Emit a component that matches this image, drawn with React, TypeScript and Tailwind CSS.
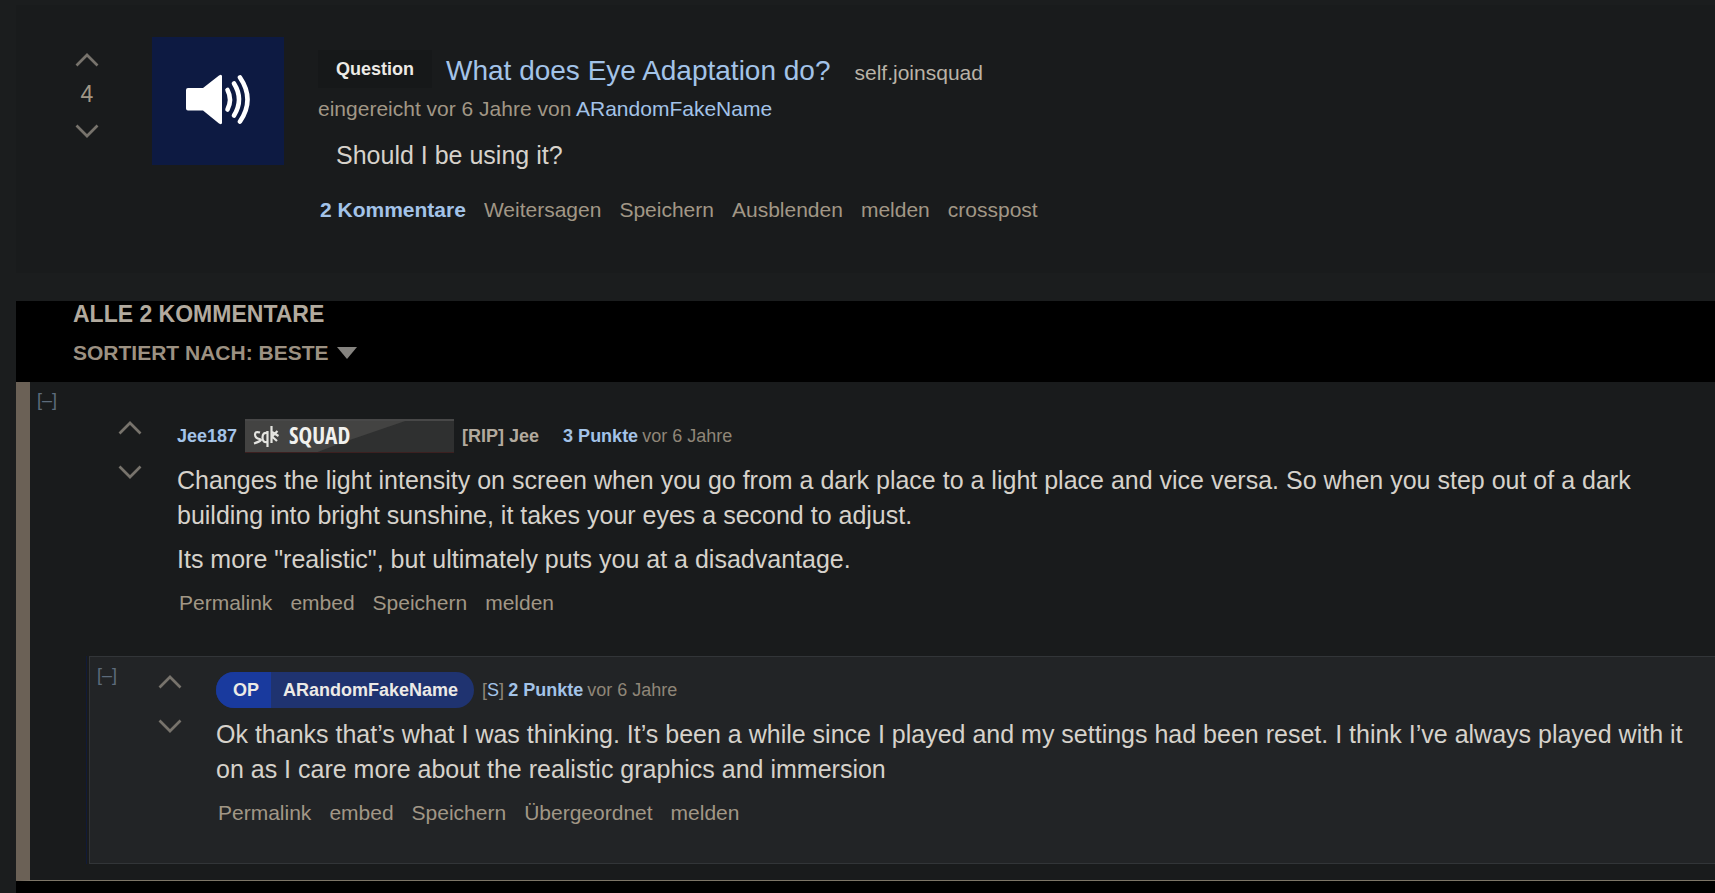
import React from 'react';

interface ArrowProps {
  dir: 'up' | 'down';
  label: string;
}

const Arrow: React.FC<ArrowProps> = ({ dir, label }) => (
  <button type="button" aria-label={label} className="block h-4 w-6">
    <svg viewBox="0 0 24 16" className="h-4 w-6" fill="none" stroke="#77736c" strokeWidth="2.7">
      <path d={dir === 'up' ? 'M1.5 13.5L12 3L22.5 13.5' : 'M1.5 2.5L12 13L22.5 2.5'} />
    </svg>
  </button>
);

const Actions: React.FC<{ items: string[] }> = ({ items }) => (
  <ul className="flex flex-wrap gap-x-[18px] pl-[2px] text-[21px] leading-6 text-[#a19786]">
    {items.map((item) => (
      <li key={item}>
        <a href="#" className={item === '2 Kommentare' ? 'font-bold text-[#a3c3e8]' : ''}>
          {item}
        </a>
      </li>
    ))}
  </ul>
);

const SpeakerThumb: React.FC = () => (
  <a href="#" aria-label="Thumbnail" className="block h-32 w-[132px] shrink-0 bg-[#0d1a42]">
    <svg viewBox="0 0 132 128" className="h-32 w-[132px]">
      <path
        d="M36 51H51L67 38.5Q70 36.5 70 39.5V85.5Q70 88.5 67 86.5L51 73.5H36Q34 73.5 34 71.5V53Q34 51 36 51Z"
        fill="#fff"
      />
      <g fill="none" stroke="#fff" strokeWidth="4.6" strokeLinecap="round">
        <path d="M75.5 53Q80.5 62.5 75.5 72.5" />
        <path d="M82 46.5Q92 62.5 82 78.5" />
        <path d="M88 40.5Q103 62.5 88 84.5" />
      </g>
    </svg>
  </a>
);

// Small banner shown next to the user name
const SquadFlair: React.FC = () => (
  <svg viewBox="0 0 209 34" className="h-[34px] w-[209px] overflow-visible" role="img" aria-label="SQUAD">
    <rect width="209" height="34" fill="#2f3030" />
    <path d="M0 0H166L96 24L70 34H0Z" fill="#434342" />
    <path d="M0 1H209" stroke="#484848" strokeWidth="2" />
    <path d="M0 33.5H209" stroke="#3c2020" strokeWidth="1" />
    <g fill="none" stroke="#e4e4e0" strokeWidth="2.2">
      <path d="M15 13.5Q10 12 10 15.5T14.5 20T9 24.5" />
      <path d="M22.5 14Q17.5 13 17.5 18.5T22.5 23M22.5 12V28" />
      <path d="M26.5 7V24M32.5 12L27 17.5L32 22M27 13L33.5 17" />
    </g>
    <text
      x="44"
      y="25"
      fill="#f1f1ee"
      fontFamily="Open Sans Condensed, Roboto Condensed, Liberation Sans Narrow, Liberation Sans, sans-serif"
      fontSize="23"
      fontWeight="bold"
    >
      SQUAD
    </text>
  </svg>
);

const Collapse: React.FC = () => (
  <button type="button" aria-label="Einklappen" className="block h-5 text-lg leading-5 text-[#5d6b7b]">
    [–]
  </button>
);

const App: React.FC = () => {
  return (
    <main className="flex min-h-screen flex-col overflow-x-hidden bg-[#1b1d1e] pl-4 font-['Liberation_Sans',Arial,sans-serif] text-[#d6d2cb]">
      <article className="mt-[5px] mb-7 flex bg-[#191b1c] pt-8 pb-[51px]">
        <div className="flex w-[136px] shrink-0 flex-col items-start pt-[15px] pl-[59px]">
          <Arrow dir="up" label="Hochwählen" />
          <span className="mt-3 mb-[15px] w-6 text-center text-[23px] leading-7 text-[#a19786]">4</span>
          <Arrow dir="down" label="Runterwählen" />
        </div>
        <SpeakerThumb />
        <div className="ml-[34px] pt-[13px]">
          <div className="flex items-start">
            <span className="mr-[14px] bg-[#161819] px-[18px] text-lg leading-[38px] font-bold text-[#eceae6]">
              Question
            </span>
            <div className="flex items-baseline gap-6 leading-[42px]">
              <h1 className="text-[28px] text-[#a3c3e8]">
                <a href="#">What does Eye Adaptation do?</a>
              </h1>
              <a href="#" className="text-[21px] leading-6 text-[#bab3a7]">
                self.joinsquad
              </a>
            </div>
          </div>
          <p className="text-[21px] leading-[34px] text-[#a19786]">
            eingereicht vor 6 Jahre von{' '}
            <a href="#" className="text-[#a3c3e8]">
              ARandomFakeName
            </a>
          </p>
          <p className="mt-3 mb-[25px] pl-[18px] text-[25px] leading-[35px]">Should I be using it?</p>
          <Actions
            items={['2 Kommentare', 'Weitersagen', 'Speichern', 'Ausblenden', 'melden', 'crosspost']}
          />
        </div>
      </article>

      <section className="flex-1 bg-black pb-3">
        <header className="h-[81px] pl-[57px] font-bold">
          <h2 className="text-[23px] leading-[26px] text-[#b2aa9e]">ALLE 2 KOMMENTARE</h2>
          <button
            type="button"
            className="mt-3 flex items-center gap-2 text-[21px] leading-7 text-[#9c9182]"
          >
            SORTIERT NACH: BESTE
            <svg viewBox="0 0 20 12" className="h-3 w-5" fill="#85837f">
              <path d="M0 0H20L10 12Z" />
            </svg>
          </button>
        </header>

        <article className="border-b border-l-[14px] border-b-[#7d7567] border-l-[#6b6156] bg-[#191b1c] pb-4">
          <div className="flex">
            <div className="w-[88px] shrink-0 pt-2 pl-[7px]">
              <Collapse />
            </div>
            <div className="w-[59px] shrink-0 space-y-7 pt-[38px]">
              <Arrow dir="up" label="Hochwählen" />
              <Arrow dir="down" label="Runterwählen" />
            </div>
            <div className="min-w-0 flex-1 pt-9">
              <div className="flex items-center text-lg leading-9 text-[#8f8678]">
                <a href="#" className="mr-2 font-bold text-[#a3c3e8]">
                  Jee187
                </a>
                <SquadFlair />
                <b className="mr-6 ml-2 text-[#b2aa9e]">[RIP] Jee</b>
                <b className="mr-1 text-[#a3c3e8]">3 Punkte</b>
                <time>vor 6 Jahre</time>
              </div>
              <div className="mt-[9px] mb-[14px] space-y-[9px] pr-5 text-[25px] leading-[35px]">
                <p>
                  Changes the light intensity on screen when you go from a dark place to a light
                  place and vice versa. So when you step out of a dark building into bright
                  sunshine, it takes your eyes a second to adjust.
                </p>
                <p>Its more "realistic", but ultimately puts you at a disadvantage.</p>
              </div>
              <Actions items={['Permalink', 'embed', 'Speichern', 'melden']} />
            </div>
          </div>

          <div className="mt-[41px] ml-14 border-l border-[#101a38] pl-[2px]">
            <article className="flex border-y border-l border-[#323538] bg-[#222426] pb-[38px]">
              <div className="w-[68px] shrink-0 pt-2 pl-[7px]">
                <Collapse />
              </div>
              <div className="w-[58px] shrink-0 space-y-7 pt-[17px]">
                <Arrow dir="up" label="Hochwählen" />
                <Arrow dir="down" label="Runterwählen" />
              </div>
              <div className="min-w-0 flex-1 pt-[15px]">
                <div className="flex items-center text-lg leading-9 text-[#8f8678]">
                  <a
                    href="#"
                    className="mr-2 flex overflow-hidden rounded-full bg-[#1f3370] font-bold text-[#eceae6]"
                  >
                    <span className="bg-[#193a9e] pr-3 pl-[17px]">OP</span>
                    <span className="pr-4 pl-3">ARandomFakeName</span>
                  </a>
                  <span className="mr-1">
                    [<a href="#" className="text-[#a3c3e8]">S</a>]
                  </span>
                  <b className="mr-1 text-[#a3c3e8]">2 Punkte</b>
                  <time>vor 6 Jahre</time>
                </div>
                <p className="mt-[9px] mb-[14px] pr-5 text-[25px] leading-[35px]">
                  Ok thanks that’s what I was thinking. It’s been a while since I played and my
                  settings had been reset. I think I’ve always played with it on as I care more
                  about the realistic graphics and immersion
                </p>
                <Actions items={['Permalink', 'embed', 'Speichern', 'Übergeordnet', 'melden']} />
              </div>
            </article>
          </div>
        </article>
      </section>
    </main>
  );
};

export default App;
